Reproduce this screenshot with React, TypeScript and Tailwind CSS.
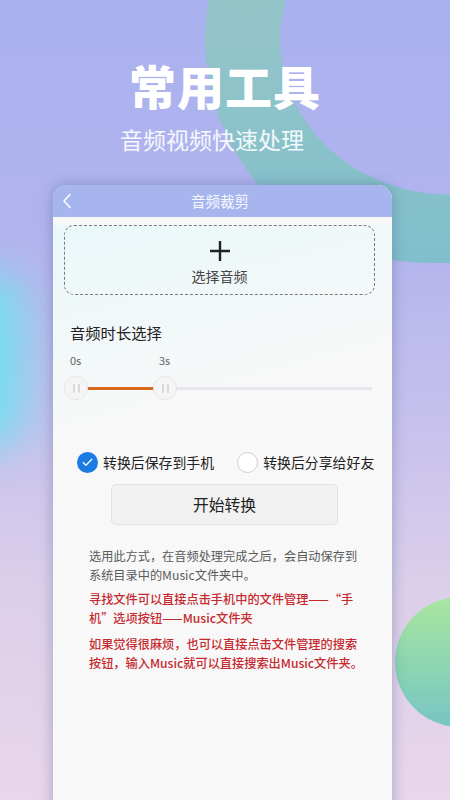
import { Check } from "lucide-react";

function ThumbKnob() {
  return (
    <div className="flex h-[24px] w-[24px] items-center justify-center gap-[3px] rounded-full border border-[#e6e6ea] bg-[#f5f5f6]">
      <span className="h-[9px] w-[2px] rounded bg-[#d9d9dd]" />
      <span className="h-[9px] w-[2px] rounded bg-[#d9d9dd]" />
    </div>
  );
}

function App() {
  return (
    <div className="relative h-[800px] w-[450px] overflow-hidden bg-[linear-gradient(180deg,#a9b2ef_0%,#b1b3ee_28%,#c6c0ec_52%,#dccfea_74%,#e8d6ea_100%)] font-['Noto_Sans_CJK_SC','Noto_Sans',sans-serif]">
      {/* background decorations */}
      <div className="absolute left-[205px] top-[-183px] h-[446px] w-[490px] rounded-full bg-[linear-gradient(180deg,#a0c9c8_0%,#92c4c9_50%,#80bfcb_100%)] [mask-image:radial-gradient(closest-side,transparent_69%,black_69.6%)]" />
      <div className="absolute left-[-50px] top-[270px] h-[180px] w-[76px] rounded-full bg-[#78dcf0] blur-[20px]" />
      <div className="absolute left-[395px] top-[597px] h-[130px] w-[130px] rounded-full bg-[linear-gradient(180deg,#aae6a0_0%,#8ed6b0_50%,#77c5c4_100%)]" />

      {/* heading */}
      <div className="relative flex flex-col items-center pt-[61px]">
        <h1 className="text-[47px] font-black leading-[48px] tracking-[1px] text-white">常用工具</h1>
        <p className="mr-[26px] mt-[18px] text-[23px] leading-[24px] text-white/90">音频视频快速处理</p>
      </div>

      {/* phone screen */}
      <div className="relative ml-[53px] mt-[34px] h-[640px] w-[339px] overflow-hidden rounded-t-[14px] bg-[#f8f8f8] shadow-[0_0_14px_rgba(70,90,140,0.4)]">
        <div className="relative flex h-[32px] items-center bg-[#a7b5ef]">
          <svg className="ml-[9px]" width="10" height="16" viewBox="0 0 10 16" fill="none">
            <path d="M8 1.5 2 8l6 6.5" stroke="white" strokeWidth="1.6" strokeLinecap="round" strokeLinejoin="round" />
          </svg>
          <span className="flex-1 pr-[24px] text-center text-[14.5px] text-white/90">音频裁剪</span>
        </div>

        <div className="bg-[linear-gradient(165deg,#eaf8fa_0%,#f8f8f8_30%)] pb-[200px]">
          <div className="ml-[11px] mr-[17px] mt-[8px] flex h-[70px] flex-col items-center rounded-[10px] border border-dashed border-[#7a7a7a] pt-[15px]">
            <svg width="20" height="20" viewBox="0 0 20 20">
              <path d="M10 0v20M0 10h20" stroke="#222" strokeWidth="2.4" />
            </svg>
            <span className="mt-[6px] text-[14px] leading-[18px] text-[#474747]">选择音频</span>
          </div>

          <div className="mt-[27px] px-[17px] text-[15.3px] leading-[20px] text-[#222]">音频时长选择</div>

          <div className="mt-[11px] flex pl-[17px] text-[11px] leading-[14px] text-[#666]">
            <span className="w-[89px]">0s</span>
            <span>3s</span>
          </div>

          <div className="relative ml-[11px] mt-[9px] h-[24px] w-[309px]">
            <div className="absolute left-[23px] top-[10.5px] h-[3px] w-[67px] bg-[#d9691f]" />
            <div className="absolute left-[112px] right-[1px] top-[10.5px] h-[3px] bg-[#e6e6ec]" />
            <div className="absolute left-0 top-0">
              <ThumbKnob />
            </div>
            <div className="absolute left-[89px] top-0">
              <ThumbKnob />
            </div>
          </div>

          <div className="ml-[24px] mt-[51px] flex h-[22px] items-center text-[13.9px] text-[#222]">
            <span className="flex h-[21px] w-[21px] items-center justify-center rounded-full bg-[#1a7be3]">
              <Check size={13} color="white" strokeWidth={2.2} />
            </span>
            <span className="ml-[5px]">转换后保存到手机</span>
            <span className="ml-[23px] h-[21px] w-[21px] rounded-full border border-[#cfcfcf] bg-white" />
            <span className="ml-[5px]">转换后分享给好友</span>
          </div>

          <button className="ml-[58px] mt-[11px] flex h-[41px] w-[227px] items-center justify-center rounded-[5px] border border-[#e2e2e2] bg-[#f1f1f1] text-[15.8px] text-[#222]">
            开始转换
          </button>

          <div className="mt-[22px] whitespace-nowrap pl-[36px] text-[12.2px] leading-[19px]">
            <p className="text-[#5a5a5a]">
              选用此方式，在音频处理完成之后，会自动保存到
              <br />
              系统目录中的Music文件夹中。
            </p>
            <p className="mt-[5px] font-medium text-[#c62a2f]">
              寻找文件可以直接点击手机中的文件管理——“手
              <br />
              机”选项按钮——Music文件夹
            </p>
            <p className="mt-[7px] font-medium text-[#c62a2f]">
              如果觉得很麻烦，也可以直接点击文件管理的搜索
              <br />
              按钮，输入Music就可以直接搜索出Music文件夹。
            </p>
          </div>
        </div>
      </div>
    </div>
  );
}

export default App;
